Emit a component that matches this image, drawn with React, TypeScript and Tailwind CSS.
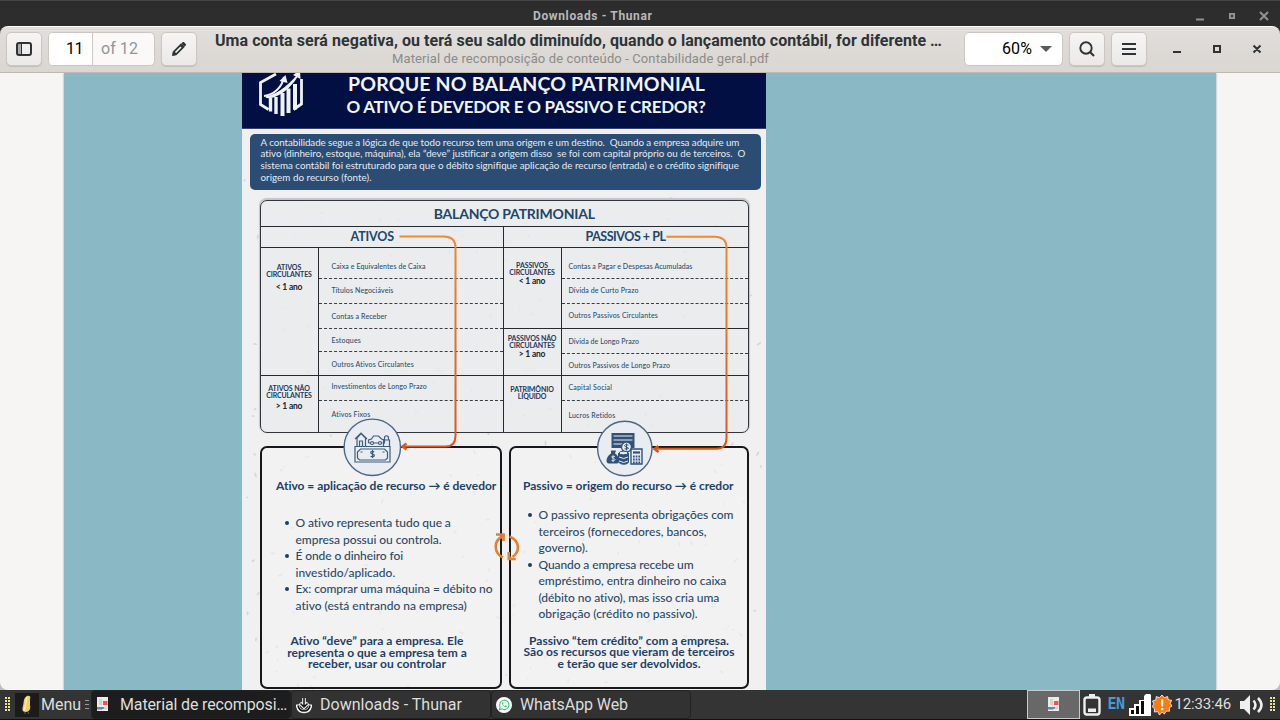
import { useLayoutEffect, useRef, useState } from "react";

/** A single line of text, tracked so that it fills the given width. */
function Run({ text, w, className = "" }: { text: string; w: number; className?: string }) {
  const ref = useRef<HTMLSpanElement>(null);
  const [tracking, setTracking] = useState(0);
  useLayoutEffect(() => {
    if (ref.current) {
      const natural = ref.current.getBoundingClientRect().width;
      setTracking((w - natural) / text.length);
    }
  }, []);
  return (
    <div className={"whitespace-pre " + className}>
      <span ref={ref} className="inline-block align-top" style={{ letterSpacing: tracking + "px" }}>{text}</span>
    </div>
  );
}

function BackTitleBar() {
  return (
    <div className="flex h-[26px] shrink-0 items-center border-t border-[#454545] bg-[#2d2d2d] pl-[533px] text-[#b9b9b9]">
      <Run text="Downloads - Thunar" w={119.5} className="w-[660px] pt-[5px] text-[12px] font-bold leading-4" />
      <svg width="87" height="26" className="shrink-0" fill="none" stroke="#929292">
        <path d="M3 18.500h8" strokeWidth="2" />
        <path d="M37 13h4v4h-4z" strokeWidth="2" />
        <path d="M67 11l8 8m0-8l-8 8" strokeWidth="2" />
      </svg>
    </div>
  );
}

const button =
  "flex h-[34px] w-9 shrink-0 items-center justify-center rounded-[5px] border border-[#cdc7c2] bg-linear-to-b from-[#f6f5f4] to-[#ebe9e7] shadow-[0_1px_1px_rgba(0,0,0,0.12)]";

function HeaderBar() {
  return (
    <header className="flex h-[47px] shrink-0 items-start rounded-t-[8px] border-b border-[#bfb8b1] border-t border-t-white bg-linear-to-b from-[#e1dedb] to-[#dad6d2] pl-1.5 pt-[5px] text-[#2e3436]">
      <div className={button}>
        <svg width="16" height="14" fill="none">
          <rect x="1" y="1" width="4" height="12" fill="#a9acac" />
          <rect x="1" y="1" width="14" height="12" rx="2" stroke="#2e3436" strokeWidth="2" />
          <path d="M5.500 1v12" stroke="#2e3436" />
        </svg>
      </div>
      <div className="ml-1.5 flex h-[34px] w-[107px] shrink-0 overflow-hidden rounded-[5px] border border-[#cdc7c2] bg-[#faf9f8] text-[16px] leading-8">
        <div className="w-[44px] border-r border-[#cdc7c2] bg-white pl-[17px] text-black">
          <Run text="11" w={17} />
        </div>
        <Run text="of 12" w={37} className="pl-[8px] text-[#929595]" />
      </div>
      <div className={button + " ml-1.5"}>
        <svg width="16" height="16" viewBox="0 0 16 16" fill="none">
          <path d="M1.500 14.500l.8-4L10 2.800l3.200 3.200-7.700 7.700z" fill="#2e3436" stroke="#2e3436" strokeLinejoin="round" />
          <path d="M4.500 11.500l5.500-5.500" stroke="#f3f2f1" strokeWidth="1.700" />
          <path d="M10.300 2.600l1.300-1.300c.5-.5 1-.5 1.500 0l1.600 1.600c.5.5.5 1 0 1.500l-1.300 1.300z" fill="#2e3436" />
        </svg>
      </div>
      <div className="ml-[18px] w-[749px] shrink-0 -mt-[2px]">
        <Run text="Uma conta será negativa, ou terá seu saldo diminuído, quando o lançamento contábil, for diferente …" w={727} className="h-5 text-[16px] font-bold leading-[22px]" />
        <Run text="Material de recomposição de conteúdo - Contabilidade geral.pdf" w={377} className="pl-[177px] text-[13px] leading-[17px] text-[#8b8b8a]" />
      </div>
      <div className="flex h-[34px] w-[99px] shrink-0 items-center rounded-[5px] border border-[#cdc7c2] bg-white pl-[37px] text-[16px] text-black">
        <Run text="60%" w={30} className="w-[38px]" />
        <svg width="12" height="7"><path d="M0 0h12l-6 6z" fill="#555a5b" /></svg>
      </div>
      <div className={button + " ml-1.5"}>
        <svg width="16" height="16" fill="none" stroke="#2e3436">
          <circle cx="7" cy="7" r="5.700" strokeWidth="1.900" />
          <path d="M11 11l4 4" strokeWidth="2.200" />
        </svg>
      </div>
      <div className={button + " ml-1.5"}>
        <svg width="14" height="12" fill="none" stroke="#2e3436" strokeWidth="2"><path d="M0 1h14M0 6h14M0 11h14" /></svg>
      </div>
      <svg width="100" height="34" className="ml-6 shrink-0" fill="none" stroke="#2e3436" strokeWidth="2">
        <path d="M2 20h8M43 14h6v6h-6zM82.500 13.500l7 7m0-7l-7 7" />
      </svg>
    </header>
  );
}

function Logo() {
  return (
    <svg width="46" height="44" viewBox="0 0 46 44" fill="none" stroke="#eff2f5">
      <path d="M18 1L2.500 9.500v22l8 5M43.500 6v25l-8 5.500" strokeWidth="2.800" />
      <path d="M12.500 25v13.500M18 24v17" strokeWidth="3.400" />
      <path d="M24.500 20v23M30.500 15.500v24.500M37 11v25.500" strokeWidth="4" />
      <path d="M6 23c9-1 18-8 20-19" strokeWidth="2" />
      <path d="M8 24c3 1 6 0 8-.5C26 20 35 11 40 2c-7 8-19 20-32 22z" fill="#eff2f5" strokeWidth="1.500" />
      <path d="M21.500 8l6-6 2 8M35 2l7-5 .5 9" fill="#eff2f5" stroke="none" />
    </svg>
  );
}

type Item = { label: string; w: number; h: string; solid?: boolean; pad: string };

const activeItems: Item[] = [
  { label: "Caixa e Equivalentes de Caixa", w: 94, h: "h-[31px]", pad: "pt-[14px]" },
  { label: "Títulos Negociáveis", w: 62, h: "h-[25px]", pad: "pt-[7px]" },
  { label: "Contas a Receber", w: 55.5, h: "h-[25px]", pad: "pt-[8px]" },
  { label: "Estoques", w: 29.5, h: "h-[23px]", pad: "pt-[7px]" },
  { label: "Outros Ativos Circulantes", w: 82.5, h: "h-[24px]", pad: "pt-[8px]", solid: true },
  { label: "Investimentos de Longo Prazo", w: 95.5, h: "h-[25px]", pad: "pt-[6px]" },
  { label: "Ativos Fixos", w: 39, h: "h-[31px]", pad: "pt-[9px]" },
];

const passiveItems: Item[] = [
  { label: "Contas a Pagar e Despesas Acumuladas", w: 124, h: "h-[31px]", pad: "pt-[14px]" },
  { label: "Dívida de Curto Prazo", w: 70, h: "h-[25px]", pad: "pt-[7px]" },
  { label: "Outros Passivos Circulantes", w: 89.5, h: "h-[25px]", pad: "pt-[7px]", solid: true },
  { label: "Dívida de Longo Prazo", w: 70.5, h: "h-[25px]", pad: "pt-[8px]" },
  { label: "Outros Passivos de Longo Prazo", w: 101.5, h: "h-[22px]", pad: "pt-[7px]", solid: true },
  { label: "Capital Social", w: 43.5, h: "h-[25px]", pad: "pt-[7px]" },
  { label: "Lucros Retidos", w: 47, h: "h-[31px]", pad: "pt-[10px]" },
];

function Items({ items, className, indent }: { items: Item[]; className: string; indent: string }) {
  return (
    <div className={"border-l border-[#252a30] text-[7px] font-medium leading-[9px] text-[#2f4f6d] " + className}>
      {items.map((it, i) => (
        <div
          key={it.label}
          className={`${it.h} ${it.pad} ${indent} ${
            i === items.length - 1 ? "" : it.solid ? "border-b border-[#252a30]" : "border-b border-dashed border-[#3a3e44]"
          }`}
        >
          <Run text={it.label} w={it.w} />
        </div>
      ))}
    </div>
  );
}

type GroupProps = { lines: [string, number][]; term?: string; className: string; gap?: string };

function Group({ lines, term, className, gap = "pt-0.5" }: GroupProps) {
  return (
    <div className={"flex flex-col items-center text-[7px] font-bold leading-[6.500px] text-[#25385a] " + className}>
      {lines.map(([text, w]) => (
        <Run key={text} text={text} w={w} />
      ))}
      {term && <Run text={term} w={26.5} className={"text-[8.500px] leading-[10px] text-[#20242c] " + gap} />}
    </div>
  );
}

function BalanceTable() {
  return (
    <section className="ml-[17.500px] mt-[10px] flex h-[233px] w-[489.500px] shrink-0 flex-col overflow-hidden rounded-[7px] border-[1.500px] border-[#33373d] bg-[#e9ebee]/80 shadow-[0_-1px_1px_1px_#c3c5c8]">
      <div className="flex h-[26px] justify-center border-b border-[#252a30] text-[14px] font-bold leading-[26px] text-[#214669]">
        <Run text="BALANÇO PATRIMONIAL" w={161} className="pl-5" />
      </div>
      <div className="flex h-[21px] border-b border-[#252a30] text-[12.500px] font-bold leading-[19px] text-[#214669]">
        <Run text="ATIVOS" w={43.5} className="w-[243px] border-r border-[#252a30] pl-[90px]" />
        <Run text="PASSIVOS + PL" w={80} className="pl-[82px]" />
      </div>
      <div className="flex flex-1">
        <div className="w-[57px]">
          <Group className="h-[128px] border-b border-[#252a30] pt-[16px]" gap="pt-[5px]" lines={[["ATIVOS", 24.5], ["CIRCULANTES", 45.5]]} term="< 1 ano" />
          <Group className="pt-[9px]" gap="pt-[3px]" lines={[["ATIVOS NÃO", 41.5], ["CIRCULANTES", 45.5]]} term="> 1 ano" />
        </div>
        <Items items={activeItems} className="w-[185px]" indent="pl-[13px]" />
        <div className="w-[58px] border-l border-[#252a30]">
          <Group className="h-[81px] border-b border-[#252a30] pt-[14px]" gap="pt-px" lines={[["PASSIVOS", 32], ["CIRCULANTES", 45.5]]} term="< 1 ano" />
          <Group className="h-[47px] border-b border-[#252a30] pt-[6px]" gap="pt-px" lines={[["PASSIVOS NÃO", 48.5], ["CIRCULANTES", 45.5]]} term="> 1 ano" />
          <Group className="pt-[10px]" lines={[["PATRIMÔNIO", 43.5], ["LÍQUIDO", 28.500]]} />
        </div>
        <Items items={passiveItems} className="flex-1" indent="pl-[7px]" />
      </div>
    </section>
  );
}

type Line = { text: string; w: number; bullet?: boolean };

const activeLines: Line[] = [
  { text: "O ativo representa tudo que a", w: 155.5, bullet: true },
  { text: "empresa possui ou controla.", w: 146 },
  { text: "É onde o dinheiro foi", w: 107.5, bullet: true },
  { text: "investido/aplicado.", w: 100 },
  { text: "Ex: comprar uma máquina = débito no", w: 197, bullet: true },
  { text: "ativo (está entrando na empresa)", w: 171.5 },
];

const passiveLines: Line[] = [
  { text: "O passivo representa obrigações com", w: 195, bullet: true },
  { text: "terceiros (fornecedores, bancos,", w: 168 },
  { text: "governo).", w: 49.5 },
  { text: "Quando a empresa recebe um", w: 155, bullet: true },
  { text: "empréstimo, entra dinheiro no caixa", w: 188 },
  { text: "(débito no ativo), mas isso cria uma", w: 181 },
  { text: "obrigação (crédito no passivo).", w: 159 },
];

function BulletList({ lines, className }: { lines: Line[]; className: string }) {
  return (
    <div className={"text-[12px] font-medium leading-[16.500px] text-[#2c4a69] " + className}>
      {lines.map((l) => (
        <div key={l.text} className="flex h-[16.500px] items-center">
          <div className={l.bullet ? "mr-[7px] size-1 rounded-full bg-[#1d3d63]" : "mr-[7px] size-1"} />
          <Run text={l.text} w={l.w} />
        </div>
      ))}
    </div>
  );
}

function Cards() {
  return (
    <section className="ml-[18px] mt-[12.500px] flex items-start gap-[7px] font-bold text-[#1e4166]">
      <div className="h-[243px] w-[242px] rounded-[7px] border-2 border-[#16181c] bg-[#f4f4f5]/60">
        <Run text="Ativo = aplicação de recurso → é devedor" w={220.5} className="pl-[14px] pt-[30px] text-[12px] leading-4" />
        <BulletList lines={activeLines} className="mt-[21.500px] pl-[22.500px]" />
        <div className="mt-[21px] flex flex-col items-center pr-2 text-[12px] leading-[11.700px]">
          <Run text="Ativo “deve” para a empresa. Ele" w={173} />
          <Run text="representa o que a empresa tem a" w={179.5} />
          <Run text="receber, usar ou controlar" w={138} />
        </div>
      </div>
      <div className="h-[243px] w-[240px] rounded-[7px] border-2 border-[#16181c] bg-[#f4f4f5]/60">
        <Run text="Passivo = origem do recurso → é credor" w={210.5} className="pl-[12px] pt-[30px] text-[12px] leading-4" />
        <BulletList lines={passiveLines} className="mt-[13.500px] pl-[16.500px]" />
        <div className="mt-[12px] flex flex-col items-center text-[12px] leading-[11.700px]">
          <Run text="Passivo “tem crédito” com a empresa." w={200} />
          <Run text="São os recursos que vieram de terceiros" w={211} />
          <Run text="e terão que ser devolvidos." w={143} />
        </div>
      </div>
    </section>
  );
}

function Speckles() {
  const specks = Array.from({ length: 260 }, (_, i) => ({
    x: (i * 137.51 + i * i * 0.7) % 524,
    y: 62 + ((i * 83.17 + i * i * 1.3) % 555),
    a: (i * 47) % 180,
    r: 0.8 + (i % 4) * 0.6,
  }));
  return (
    <svg className="absolute inset-0" width="524" height="617" fill="#c0c1c4" fillOpacity="0.550">
      {specks.map((s, i) => (
        <ellipse key={i} cx={s.x} cy={s.y} rx={s.r} ry="0.900" transform={`rotate(${s.a} ${s.x} ${s.y})`} />
      ))}
    </svg>
  );
}

/* Connectors and medallions that lie over the table and the cards. */
function Overlay() {
  return (
    <svg className="absolute inset-0" width="524" height="617" viewBox="242.5 73 524 617" fill="none">
      <defs>
        <linearGradient id="flow" gradientUnits="userSpaceOnUse" x1="0" y1="236" x2="0" y2="450">
          <stop stopColor="#ec8a35" />
          <stop offset="1" stopColor="#dc5518" />
        </linearGradient>
      </defs>
      <g stroke="url(#flow)" strokeWidth="2">
        <path d="M400 236.500h44q12 0 12 11v188q0 11-10 11h-43M667 236.700h48q12 0 12 11v190q0 11-10 11h-62" />
        <path d="M407 443.500l-4 3 4 3M659 446l-4 3 4 3" strokeWidth="2.400" />
      </g>
      <g fill="#e9edf2" stroke="#4c6784" strokeWidth="1.400">
        <circle cx="372.800" cy="447.300" r="28.200" />
        <circle cx="625.300" cy="448.500" r="27.200" />
      </g>
      <g stroke="#3d5d7f" strokeWidth="1.200">
        <path d="M355.500 446.500h35v15.500h-35zM361 449h24l3 3v6l-2 2h-26l-2-2v-6zM361 452h2m20 0h2" />
        <path d="M357.500 446v-8l4-4.500 4.500 4.500v8M355.500 439l6-6 6 6M360 446v-5h3v5" />
        <path d="M369 443v-3l3-1 2-3h5l3 3 3 1v3h-2m-4 0h-5m-3 0h-2" />
        <circle cx="372.500" cy="443" r="1.500" /><circle cx="380.500" cy="443" r="1.500" />
        <path d="M384 446v-6h6v6M385 440v-2c0-3 4-3 4 0v2" />
        <path d="M374.700 451.800q-3.500-1-3.500.8c0 2 3.700 1 3.700 3q0 1.800-3.900.8M373 450v8" />
      </g>
      <g>
        <path d="M612 433h23v15h-23z" fill="#2f527a" />
        <path d="M614 436h19M614 440h19M614 444h10" stroke="#e9edf2" strokeWidth="1.200" />
        <path d="M611.500 450.500h5l-1 3c5 3 5 10 2 10h-8c-4 0-3-7 2-10z" fill="#2f527a" />
        <path d="M615.500 456.500q-4-1-3 1c4 1 4 4-.5 3M613.500 455.500v6.500" stroke="#e9edf2" strokeWidth=".9" />
        <circle cx="627" cy="447" r="5" fill="#e9edf2" stroke="#2f527a" strokeWidth="1.300" />
        <path d="M629 445q-4-1-4 .5c0 2 4 1 4 3q-1 1-4 .3M627 443.500v7" stroke="#2f527a" />
        <path d="M619 453v9c2 3 9 3 10 0v-9" fill="#2f527a" stroke="#2f527a" />
        <ellipse cx="624" cy="453" rx="4.500" ry="1.800" fill="#e9edf2" stroke="#2f527a" />
        <path d="M619.500 457q5 3 9 0m-9 4q5 3 9 0" stroke="#e9edf2" />
        <path d="M631.500 449h11v15h-11z" fill="#e9edf2" stroke="#2f527a" strokeWidth="1.400" />
        <path d="M633.500 452.500h7" stroke="#2f527a" strokeWidth="2.200" />
        <path d="M633.500 456.500h7.500m-7.500 3h7.500m-7.500 3h7.500" stroke="#2f527a" strokeWidth="1.800" strokeDasharray="1.700 1" />
      </g>
      <g stroke="#e08034" strokeWidth="2.600">
        <path d="M503.500 557.500C494 553 494 541 502.500 536.500M510 536.500c10 4 11 15 3 20.500" />
        <path d="M496.500 534.500l7.500 0 0 6.500M509.300 552v7h7" />
        <path d="M500 534h5v5zM508.500 554v5.500h5.500z" fill="#e08034" stroke="none" />
      </g>
    </svg>
  );
}

function Infographic() {
  return (
    <article className="relative ml-[178px] flex h-full w-[524px] flex-col overflow-hidden bg-[#f0f0f1] font-['Lato',sans-serif]">
      <Speckles />
      <div className="relative flex h-full flex-col">
        <div className="flex h-14 shrink-0 items-start border-b border-[#39426a] bg-[#020f42] pl-[15.500px] font-bold text-[#f2f4f6]">
          <Logo />
          <div className="-mt-px pl-[43px]">
            <Run text="PORQUE NO BALANÇO PATRIMONIAL" w={357} className="h-[22.500px] pl-[1.500px] text-[19.500px] leading-[23px]" />
            <Run text="O ATIVO É DEVEDOR E O PASSIVO E CREDOR?" w={359} className="text-[17px] leading-[23px]" />
          </div>
        </div>
        <div className="ml-[7.500px] mt-[5px] h-14 w-[511.500px] shrink-0 rounded-[5px] bg-[#2b4d74] pl-[11px] pt-[2.500px] text-[9.800px] leading-[11.800px] text-[#e4eaf1]">
          <Run text="A contabilidade segue a lógica de que todo recurso tem uma origem e um destino.  Quando a empresa adquire um" w={479} />
          <Run text="ativo (dinheiro, estoque, máquina), ela “deve” justificar a origem disso  se foi com capital próprio ou de terceiros.  O" w={485} />
          <Run text="sistema contábil foi estruturado para que o débito signifique aplicação de recurso (entrada) e o crédito signifique" w={478} />
          <Run text="origem do recurso (fonte)." w={111} />
        </div>
        <BalanceTable />
        <Cards />
      </div>
      <Overlay />
    </article>
  );
}

function PageIcon() {
  return (
    <svg width="13" height="15" viewBox="0 0 13 15">
      <path d="M1 0h11v14H1z" fill="#eeeae9" />
      <path d="M3 3h3M3 5h3M3 7h3M8 11h3" stroke="#c6b7b5" />
      <path d="M7 4h4.500v4H7z" fill="#ea5750" />
      <path d="M1 10h7v1.500l-2 1H1z" fill="#6784ac" />
    </svg>
  );
}

function Grip() {
  return (
    <svg width="6" height="16" fill="#e9e48f">
      {[0, 3, 6, 9, 12].map((y) => (
        <path key={y} d={`M0 ${y}h2v2h-2zM3 ${y}h2v2h-2z`} />
      ))}
    </svg>
  );
}

const task = "flex h-[29px] w-[200px] shrink-0 items-center rounded-[4px] border border-[#222] pl-1 text-[16px]";

function Taskbar() {
  return (
    <footer className="flex h-[30px] shrink-0 items-center border-b border-[#111] bg-[#343434] pl-[5px] text-[#dddddb]">
      <Grip />
      <div className="ml-1 flex h-6 w-6 items-center justify-center bg-[#1b1b1b]">
        <svg width="12" height="20" viewBox="0 0 12 20">
          <path d="M6 1c3-1 4 1 3 3v6c1 4-1 7-4 7-4 0-4-3-3-6 1-3 0-8 4-10z" fill="#f1cf68" />
          <path d="M6 2c-1 4-1 9-3 14" stroke="#fff0a8" strokeWidth="1.500" fill="none" />
          <path d="M4 17v2M7 17l1 2" stroke="#77653b" />
        </svg>
      </div>
      <Run text="Menu" w={40} className="ml-[2px] w-[44px] text-[16px]" />
      <svg width="6" height="12" stroke="#9b9b9b"><path d="M0 1.500h4M0 5.500h4M0 9.500h4" /></svg>
      <div className={task + " bg-[#1d1d1d]"}>
        <PageIcon />
        <Run text="Material de recomposi…" w={167} className="ml-[11px]" />
      </div>
      <div className={task + " bg-[#323232]"}>
        <svg width="16" height="18" viewBox="0 0 16 18" fill="none">
          <path d="M8 2v9M4 7l4 4 4-4M1.500 8.500q.5 7 6.500 7t6.500-7" stroke="#f4f4f4" strokeWidth="3.600" />
          <path d="M8 2v9M4.500 7.500l3.500 3.500 3.500-3.500M2 9.500q1 5.500 6 5.500t6-5.500" stroke="#111" strokeWidth="1.500" />
        </svg>
        <Run text="Downloads - Thunar" w={142} className="ml-[8px]" />
      </div>
      <div className={task + " bg-[#323232]"}>
        <svg width="16" height="16" viewBox="0 0 16 16" fill="none">
          <circle cx="8" cy="8" r="8" fill="#fff" />
          <path d="M3.300 12.700l.8-2.700a4.700 4.700 0 1 1 1.800 1.900z" stroke="#35cf68" strokeWidth="1.100" />
          <path d="M6 5.500c0 2.500 2 4.700 4.500 4.800l.5-1.300-1.500-.7-.8.7c-.8-.3-1.300-.9-1.700-1.600l.6-.8-.6-1.400z" fill="#35cf68" />
        </svg>
        <Run text="WhatsApp Web" w={108} className="ml-[8px]" />
      </div>
      <div className="ml-auto flex h-[29px] w-[53px] shrink-0 items-center justify-center border border-[#c9c9c9] bg-[#686868]"><PageIcon /></div>
      <svg width="18" height="22" viewBox="0 0 18 22" className="ml-[3px] shrink-0" fill="none">
        <path d="M6 0h6v3H6z" fill="#eee" />
        <rect x="1.500" y="3.500" width="15" height="17" rx="2.500" stroke="#eee" strokeWidth="2.400" />
        <path d="M5 14.500h8V18H5z" fill="#eee" />
      </svg>
      <Run text="EN" w={17} className="ml-[7px] font-['DejaVu_Sans_Mono',monospace] text-[15px] font-bold text-[#459bd3]" />
      <svg width="22" height="22" viewBox="0 0 22 22" className="ml-[4px] shrink-0">
        <path d="M0 14h5v-4h5V6h5V2l2-2h4l1 1v21H0z" fill="#fff" />
        <path d="M2 16h3v4H2zM7 12h3v8H7zM12 7h3v13h-3z" fill="#0b0b0b" />
      </svg>
      <svg width="20" height="20" viewBox="0 0 20 20" className="ml-px shrink-0">
        <path d="M10 0l2.300 2.700L15.600 1.500l.7 3.300 3.400.5L18.200 8.300 20 11l-2.700 1.800.2 3.400-3.300-.1L12.400 19 10 17l-2.500 3-1.700-3.400-3.400.4.1-3.300L0 11.500l2-2.400L.5 6l3.300-1 .4-3.400 3.300 1z" fill="#f57d12" stroke="#fff" strokeWidth=".8" />
        <path d="M9 4.500h2.300l-.3 7H9.300zM9 13h2.300v2.300H9z" fill="#fff" />
      </svg>
      <Run text="12:33:46" w={56.5} className="ml-[3px] text-[15px]" />
      <svg width="25" height="22" viewBox="0 0 25 22" className="ml-[9px] shrink-0" fill="none">
        <path d="M0 7h4l6-6v20l-6-6H0z" fill="#efefee" />
        <path d="M13.500 6.500q4 4.500 0 9M18 4q7 7 0 14" stroke="#efefee" strokeWidth="2.500" />
      </svg>
      <div className="ml-[5px] mr-1 shrink-0"><Grip /></div>
    </footer>
  );
}

export default function App() {
  return (
    <div className="flex h-[720px] w-[1280px] flex-col overflow-hidden bg-[#2d2d2d] font-['Roboto',sans-serif]">
      <BackTitleBar />
      <HeaderBar />
      <div className="min-h-0 flex-1 bg-[#bdbdbb]">
        <main className="h-full overflow-hidden rounded-b-[8px] bg-[#f6f5f4] pl-16">
          <div className="h-full w-[1152px] bg-[#8ab8c5] shadow-[0_0_2px_#999]">
            <Infographic />
          </div>
        </main>
      </div>
      <Taskbar />
    </div>
  );
}
